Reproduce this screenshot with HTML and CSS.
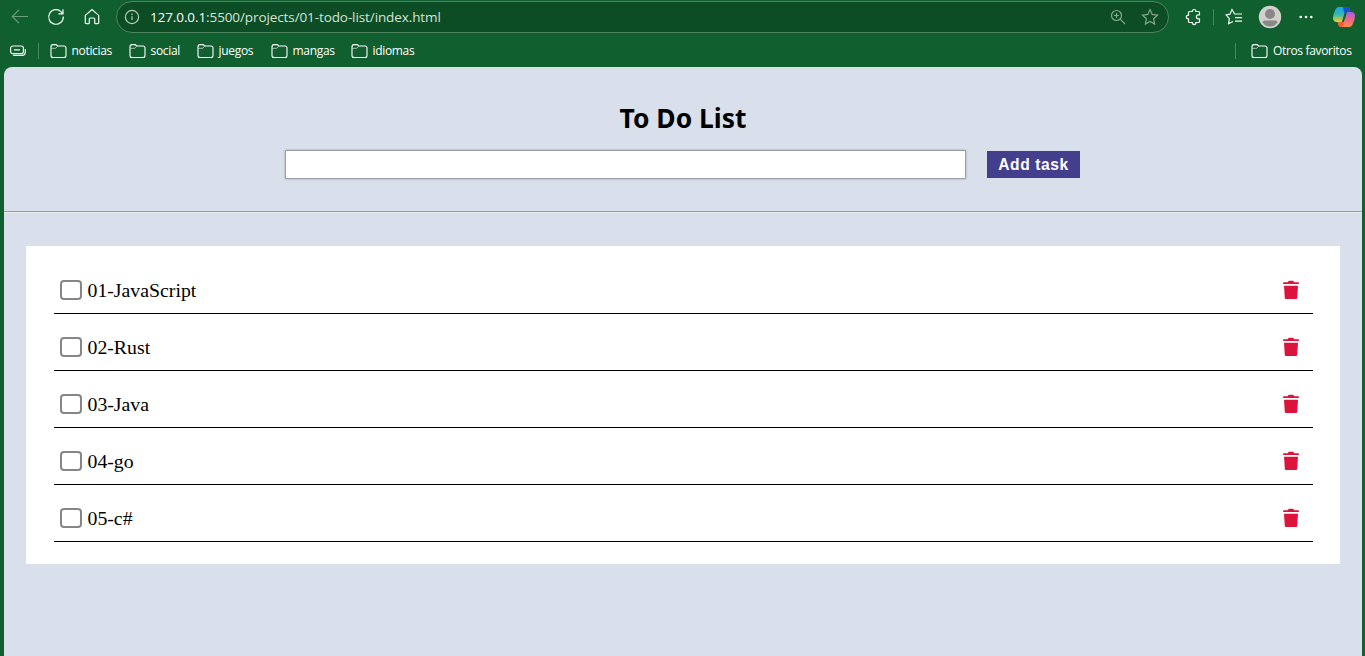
FILE: index.html
```html
<!DOCTYPE html>
<html lang="es">
<head>
<meta charset="utf-8">
<title>To Do List</title>
<link rel="stylesheet" href="styles.css">
</head>
<body>
<svg class="defs" width="0" height="0">
  <symbol id="folder" viewBox="0 0 17 16"><path d="M1 4C1 2.500 1.600 1.600 3 1.600h2.800c.7 0 1 .3 1.400.9l.3.500H14c1.400 0 2 .7 2 2v7.500c0 1.300-.7 2-2 2H3c-1.300 0-2-.7-2-2z" fill="none" stroke="currentColor" stroke-width="1.100"/><path d="M1.300 5.300h4.500L7.500 3.300" fill="none" stroke="currentColor" stroke-width=".8" opacity=".75"/></symbol>
  <symbol id="trash" viewBox="0 0 18 20"><path d="M1.500 2.200h4.200Q6.500.8 7.500.8h3q1 0 1.800 1.400h4.200q.8.800.3 1.800H1.200q-.5-1 .3-1.800zM2 5.700h14l-.8 12.200q-.1 1-1.100 1H3.900q-1 0-1.100-1z" fill="currentColor"/></symbol>
</svg>
<header class="chrome">
  <nav class="toolbar">
    <svg class="back" width="18" height="18" viewBox="0 0 18 18"><path d="M17 8.500H1.500M8 1.800L1.300 8.500 8 15.200"/></svg>
    <svg class="reload" width="18" height="18" viewBox="0 0 18 18"><path d="M16.300 8.500a7.300 7.300 0 1 1-2.100-4.700L15.800 5.500M16 1.300v4.500h-4.600"/></svg>
    <svg class="home" width="18" height="18" viewBox="0 0 18 18"><path d="M2.300 7.400L9 1.600l6.700 5.800v7.300q0 1-1 1h-2q-1 0-1-1V11q0-1-1-1H7.300q-1 0-1 1v3.700q0 1-1 1h-2q-1 0-1-1z"/></svg>
    <div class="address">
      <svg width="16" height="16" viewBox="0 0 16 16"><circle cx="8" cy="8" r="6.600"/><path d="M8 7.200v3.900M8 4.600v1.300"/></svg>
      <span class="url"><b>127.0.0.1</b>:5500/projects/01-todo-list/index.html</span>
      <svg class="dim" width="16" height="16" viewBox="0 0 16 16"><circle cx="6.500" cy="6.500" r="5"/><path d="M10.200 10.200L15 15M6.500 4v5M4 6.500h5"/></svg>
      <svg class="dim star" width="18" height="18" viewBox="0 0 18 18"><path d="M9 1.600l2.200 4.800 5.300.7-3.900 3.600 1 5.300L9 13.400 4.400 16l1-5.300-3.900-3.600 5.300-.7z"/></svg>
    </div>
    <svg class="puzzle" width="18" height="18" viewBox="0 0 18 18"><path d="M4.500 3.500h2.800c0-2.700 3.600-2.700 3.600 0h2.600q1 0 1 1v2.300h-1.300c-2.400 0-2.400 4 0 4h1.300v2.700q0 1-1 1h-2.600c0 2.700-3.600 2.700-3.600 0H4.500q-1 0-1-1v-2.600c-2.900 0-2.900-3.800 0-3.800V4.500q0-1 1-1z"/></svg>
    <i class="divider"></i>
    <svg class="favs" width="18" height="18" viewBox="0 0 18 18"><path d="M11 6H9.600L7 1.500 4.900 6.200 1.200 6.900l3.100 3.700-.7 5.200L8 13.500M10.500 6H17M10 9.600h7M10 13.200h7"/></svg>
    <svg class="avatar" width="24" height="24" viewBox="0 0 24 24"><circle cx="12" cy="12" r="11.200" fill="#d2d0ce"/><circle cx="12" cy="9" r="5" fill="#8a8886"/><path d="M4.500 17.500q0-2 2-2h11q2 0 2 2-3 4-7.500 4t-7.500-4z" fill="#8a8886"/></svg>
    <svg class="more" width="16" height="16" viewBox="0 0 16 16"><g class="solid"><circle cx="2.700" cy="8" r="1.300"/><circle cx="8" cy="8" r="1.300"/><circle cx="13.300" cy="8" r="1.300"/></g></svg>
    <svg class="copilot" width="24" height="22" viewBox="0 0 24 22">
      <defs>
        <linearGradient id="cool" x1="0" y1="0" x2="0" y2="1"><stop offset="0" stop-color="#18a5f0"/><stop offset=".5" stop-color="#35b9b0"/><stop offset="1" stop-color="#f5cf25"/></linearGradient>
        <linearGradient id="warm" x1="0" y1="0" x2="0" y2="1"><stop offset="0" stop-color="#a65cf0"/><stop offset=".5" stop-color="#ee6489"/><stop offset="1" stop-color="#ff9148"/></linearGradient>
      </defs>
      <path d="M7 1h8q2 0 2.700 2.500L18.500 6H15q-2 0-2.700 2.500L10 16H5q-4 0-4-4 0-3 2.300-8Q4.300 1 7 1z" fill="url(#cool)"/>
      <path d="M11 1h4q2 0 2.700 2.500L18.500 6H15q-2 0-2.700 2z" fill="#174fd1"/>
      <path d="M17 21H9q-2 0-2.700-2.500L5.500 16H9q2 0 2.700-2.500L14 6h5q4 0 4 4 0 3-2.300 8-1 3-3.700 3z" fill="url(#warm)"/>
      <path d="M6 16h3q2 0 2.700-2l-.5 5q-.3 2-2.200 2-2 0-2.500-2z" fill="#f65a35"/>
      <path d="M12.300 8.500L14 6h1q-1 4-3.300 10H10z" fill="#10602f"/>
    </svg>
  </nav>
  <nav class="bookmarks">
    <svg class="tabs" width="18" height="14" viewBox="0 0 18 14"><rect x="1.600" y="2" width="12.800" height="7.600" rx="2.200"/><path d="M5 5.800h6M4 11.400h9q3.300 0 3.300-3.300V5"/></svg>
    <i class="divider"></i>
    <a class="mark m1"><svg width="17" height="16"><use href="#folder"/></svg><span>noticias</span></a>
    <a class="mark m2"><svg width="17" height="16"><use href="#folder"/></svg><span>social</span></a>
    <a class="mark m3"><svg width="17" height="16"><use href="#folder"/></svg><span>juegos</span></a>
    <a class="mark m4"><svg width="17" height="16"><use href="#folder"/></svg><span>mangas</span></a>
    <a class="mark m5"><svg width="17" height="16"><use href="#folder"/></svg><span>idiomas</span></a>
    <i class="divider last"></i>
    <a class="mark other"><svg width="17" height="16"><use href="#folder"/></svg><span>Otros favoritos</span></a>
  </nav>
</header>
<main class="page">
  <section class="top">
    <h1>To Do List</h1>
    <form class="form"><input class="field" type="text" aria-label="Task"><button class="add" type="button">Add task</button></form>
  </section>
  <ul class="list">
    <li><label><input type="checkbox"><span>01-JavaScript</span></label><svg class="trash" width="18" height="20"><use href="#trash"/></svg></li>
    <li><label><input type="checkbox"><span>02-Rust</span></label><svg class="trash" width="18" height="20"><use href="#trash"/></svg></li>
    <li><label><input type="checkbox"><span>03-Java</span></label><svg class="trash" width="18" height="20"><use href="#trash"/></svg></li>
    <li><label><input type="checkbox"><span>04-go</span></label><svg class="trash" width="18" height="20"><use href="#trash"/></svg></li>
    <li><label><input type="checkbox"><span>05-c#</span></label><svg class="trash" width="18" height="20"><use href="#trash"/></svg></li>
  </ul>
</main>
</body>
</html>
```
FILE: styles.css
```css
* { box-sizing: border-box; }
body {
  margin: 0;
  height: 656px;
  overflow: hidden;
  display: flex;
  flex-direction: column;
  background: #10602f;
  font-family: "Open Sans", "Noto Sans", sans-serif;
}
.defs { position: absolute; }
svg { display: block; flex: none; }
.chrome { height: 67px; color: #fff; flex: none; }
.chrome svg { fill: none; stroke: #f4faf6; stroke-width: 1.2; }
.chrome .avatar, .chrome .copilot { stroke: none; }
.chrome .solid { fill: #fff; stroke: none; }
.toolbar { display: flex; align-items: center; height: 34px; }
.chrome .back { margin-left: 11px; stroke: #6c9d7f; }
.reload { margin-left: 18px; }
.home { margin-left: 18px; }
.address {
  display: flex;
  align-items: center;
  width: 1053px;
  height: 32px;
  margin-left: 15px;
  padding: 0 9px 0 7px;
  border: 1px solid #4f8460;
  border-radius: 16px;
  background: #0d4d25;
}
.chrome .address svg { stroke: #b9cdc0; }
.chrome .address .dim { stroke: #86a892; }
.address .star { margin-left: 15px; }
.url { flex: 1; margin-left: 10px; font-size: 13.5px; letter-spacing: -0.1px; line-height: 20px; white-space: nowrap; color: #d5e2d9; }
.url b { font-weight: 400; color: #fff; }
.puzzle { margin-left: 16px; }
.divider { width: 1px; height: 16px; background: #4b8761; }
.toolbar .divider { margin-left: 10px; }
.favs { margin-left: 11px; }
.avatar { margin-left: 15px; }
.more { margin-left: 16px; }
.copilot { margin-left: 18px; }
.bookmarks { display: flex; align-items: center; height: 33px; padding: 0 13px 0 9px; }
.bookmarks .divider { margin-left: 11px; }
.bookmarks .last { margin-left: auto; }
.mark { display: flex; align-items: center; gap: 5px; margin-left: 10.6px; font-size: 12px; letter-spacing: -0.34px; line-height: 18px; white-space: nowrap; }
.mark span { width: 63px; }
.m1 span { width: 42px; }
.m2 span { width: 31px; }
.m3 span { width: 37px; }
.m4 span { width: 43px; }
.m2, .m3, .m4, .m5 { margin-left: 15px; }
.other { margin-left: 15px; }
.other span { width: 79px; }
.page {
  flex: 1;
  margin: 0 3px 0 4px;
  border-radius: 8px 8px 0 0;
  background: #d9dfeb;
}
.top {
  display: flex;
  flex-direction: column;
  align-items: center;
  height: 146px;
  border-bottom: 1px solid #eeeeee;
  box-shadow: inset 0 -1px #9a9a9a;
}
h1 { margin: 33px 0 0; font: 700 26.4px/36px "Noto Sans", sans-serif; }
.form { display: flex; align-items: center; gap: 21px; margin: 14px 1px 0 0; }
.field { width: 681px; height: 29px; border: 1px solid #9a9ca9; border-radius: 1px; box-shadow: 0 0 2px #8f93a3; background: #fff; }
.add { width: 93px; height: 27px; padding: 0; border: 0; background: #433f8d; color: #fff; font: 700 15.6px/27px "Liberation Sans", sans-serif; letter-spacing: 0.6px; }
.list { list-style: none; height: 318px; margin: 33px 22px 0; padding: 11px 27px 0 28px; background: #fff; font: 19.8px/24px "Liberation Serif", serif; }
.list li { display: flex; align-items: center; justify-content: space-between; height: 57px; padding: 10px 13px 0 6px; border-bottom: 1px solid #000; }
label { display: flex; align-items: center; gap: 5.5px; }
label input { appearance: none; width: 22px; height: 20px; margin: 0; border: 2px solid #868686; border-radius: 4px; }
.trash { color: #dc143c; }
```
